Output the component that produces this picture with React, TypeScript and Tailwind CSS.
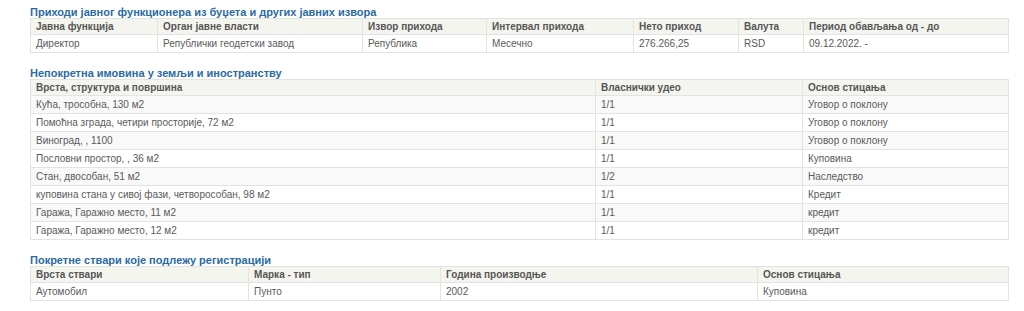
import React from 'react';

type Section = {
  title: string;
  cols: { label: string; w: number }[];
  rows: string[][];
  striped?: boolean;
};

const SECTIONS: Section[] = [
  {
    title: 'Приходи јавног функционера из буџета и других јавних извора',
    cols: [
      { label: 'Јавна функција', w: 127 },
      { label: 'Орган јавне власти', w: 205 },
      { label: 'Извор прихода', w: 124 },
      { label: 'Интервал прихода', w: 147 },
      { label: 'Нето приход', w: 105 },
      { label: 'Валута', w: 65 },
      { label: 'Период обављања од - до', w: 205 },
    ],
    rows: [['Директор', 'Републички геодетски завод', 'Република', 'Месечно', '276.266,25', 'RSD', '09.12.2022. -']],
  },
  {
    title: 'Непокретна имовина у земљи и иностранству',
    cols: [
      { label: 'Врста, структура и површина', w: 565 },
      { label: 'Власнички удео', w: 207 },
      { label: 'Основ стицања', w: 206 },
    ],
    striped: true,
    rows: [
      ['Кућа, трособна, 130 м2', '1/1', 'Уговор о поклону'],
      ['Помоћна зграда, четири просторије, 72 м2', '1/1', 'Уговор о поклону'],
      ['Виноград, , 1100', '1/1', 'Уговор о поклону'],
      ['Пословни простор, , 36 м2', '1/1', 'Куповина'],
      ['Стан, двособан, 51 м2', '1/2', 'Наследство'],
      ['куповина стана у сивој фази, четворособан, 98 м2', '1/1', 'Кредит'],
      ['Гаража, Гаражно место, 11 м2', '1/1', 'кредит'],
      ['Гаража, Гаражно место, 12 м2', '1/1', 'кредит'],
    ],
  },
  {
    title: 'Покретне ствари које подлежу регистрацији',
    cols: [
      { label: 'Врста ствари', w: 218 },
      { label: 'Марка - тип', w: 192 },
      { label: 'Година производње', w: 317 },
      { label: 'Основ стицања', w: 251 },
    ],
    rows: [['Аутомобил', 'Пунто', '2002', 'Куповина']],
  },
];

const DataTable: React.FC<{ section: Section }> = ({ section }) => (
  <div className="mb-[14px]">
    <h3 className="text-[11px] font-bold leading-[12px] text-[#2a6aa6]">{section.title}</h3>
    <table className="table-fixed border-collapse w-[978px] text-[10px] text-[#5a5a5a]">
      <colgroup>
        {section.cols.map((c) => (
          <col key={c.label} style={{ width: c.w }} />
        ))}
      </colgroup>
      <thead>
        <tr className="bg-[#f5f5f0]">
          {section.cols.map((c) => (
            <th key={c.label} className="h-[16px] border border-[#e3e3e0] px-[5px] text-left font-bold leading-[14px] text-[#555]">
              {c.label}
            </th>
          ))}
        </tr>
      </thead>
      <tbody>
        {section.rows.map((row, i) => (
          <tr key={i} className={section.striped && i % 2 === 0 ? 'bg-[#f9f9f9]' : 'bg-white'}>
            {row.map((cell, j) => (
              <td key={j} className="h-[18px] border border-[#e3e3e0] px-[5px] leading-[16px]">
                {cell}
              </td>
            ))}
          </tr>
        ))}
      </tbody>
    </table>
  </div>
);

export default function App() {
  return (
    <div className="w-[1024px] h-[311px] bg-white pl-[30px] pt-[6px] font-['Liberation_Sans',Arial,sans-serif]">
      {SECTIONS.map((s) => (
        <DataTable key={s.title} section={s} />
      ))}
    </div>
  );
}
